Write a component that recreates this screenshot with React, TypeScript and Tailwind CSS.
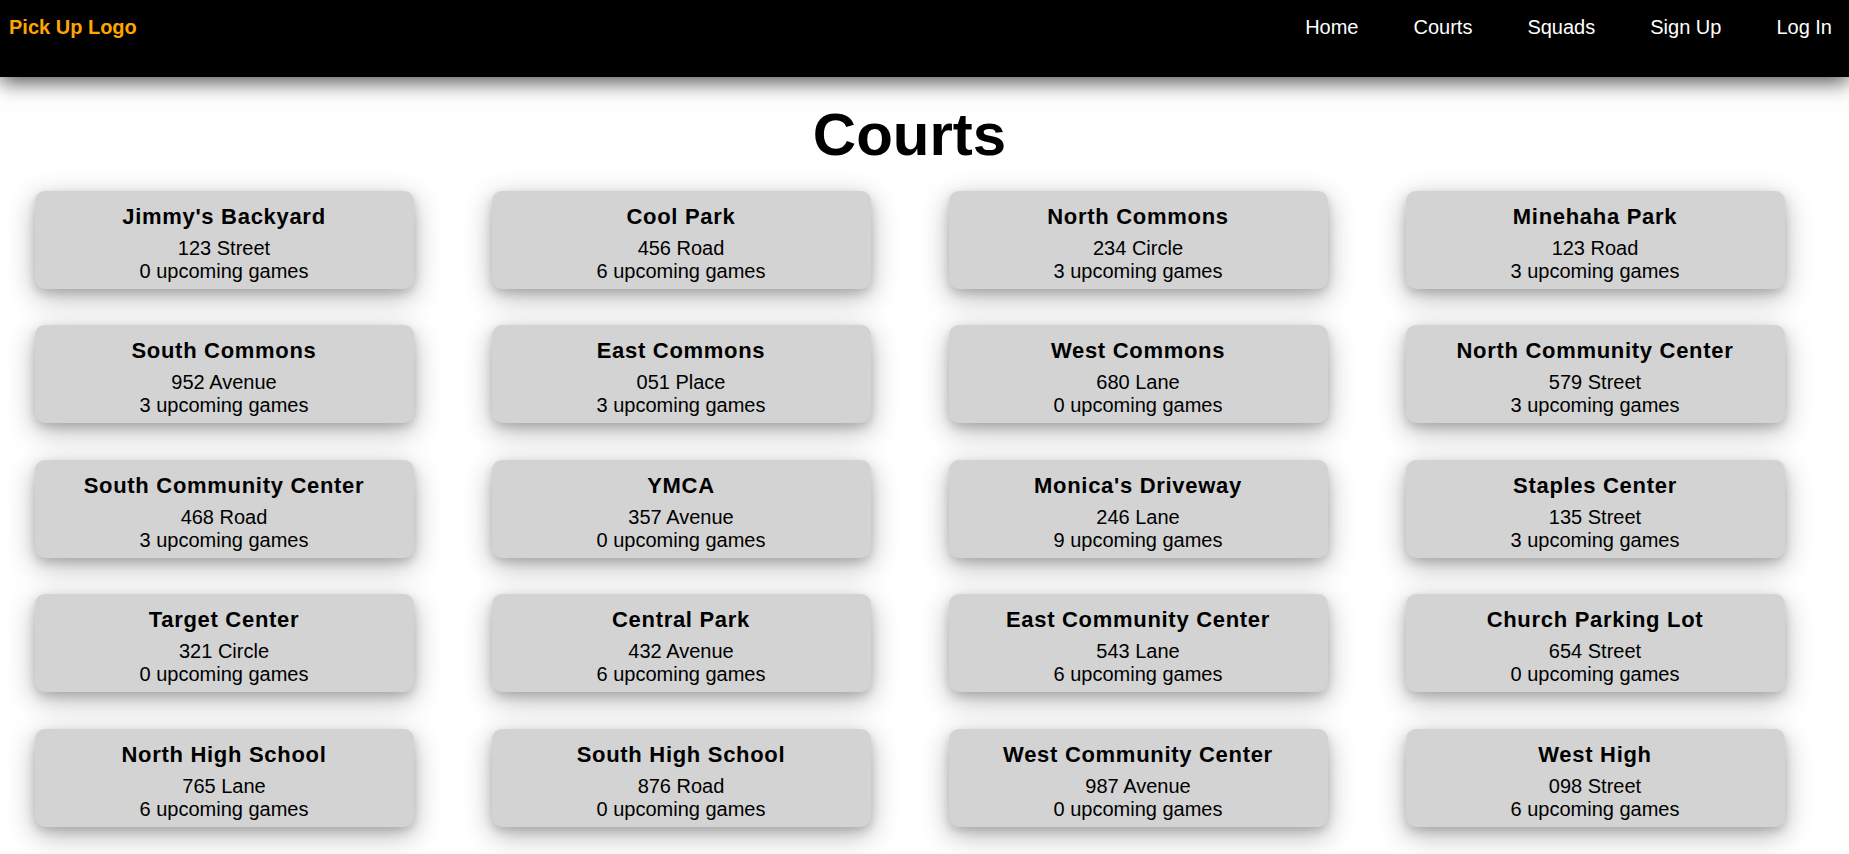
import React from 'react';

interface Court {
  name: string;
  address: string;
  games: number;
}

const courts: Court[] = [
  { name: "Jimmy's Backyard", address: '123 Street', games: 0 },
  { name: 'Cool Park', address: '456 Road', games: 6 },
  { name: 'North Commons', address: '234 Circle', games: 3 },
  { name: 'Minehaha Park', address: '123 Road', games: 3 },
  { name: 'South Commons', address: '952 Avenue', games: 3 },
  { name: 'East Commons', address: '051 Place', games: 3 },
  { name: 'West Commons', address: '680 Lane', games: 0 },
  { name: 'North Community Center', address: '579 Street', games: 3 },
  { name: 'South Community Center', address: '468 Road', games: 3 },
  { name: 'YMCA', address: '357 Avenue', games: 0 },
  { name: "Monica's Driveway", address: '246 Lane', games: 9 },
  { name: 'Staples Center', address: '135 Street', games: 3 },
  { name: 'Target Center', address: '321 Circle', games: 0 },
  { name: 'Central Park', address: '432 Avenue', games: 6 },
  { name: 'East Community Center', address: '543 Lane', games: 6 },
  { name: 'Church Parking Lot', address: '654 Street', games: 0 },
  { name: 'North High School', address: '765 Lane', games: 6 },
  { name: 'South High School', address: '876 Road', games: 0 },
  { name: 'West Community Center', address: '987 Avenue', games: 0 },
  { name: 'West High', address: '098 Street', games: 6 },
];

const navLinks = ['Home', 'Courts', 'Squads', 'Sign Up', 'Log In'];

const CourtCard: React.FC<{ court: Court }> = ({ court }) => (
  <div className="bg-[#d3d3d3] rounded-[10px] pt-[13px] pb-[6px] text-center text-black shadow-[0_4px_10px_0_rgba(0,0,0,0.15),0_8px_28px_0_rgba(0,0,0,0.3)]">
    <h3 className="text-[22px] leading-[25px] font-bold tracking-[0.7px] mb-[8px]">{court.name}</h3>
    <p className="text-[20px] leading-[23px]">{court.address}</p>
    <p className="text-[20px] leading-[23px]">{court.games} upcoming games</p>
  </div>
);

const App: React.FC = () => {
  return (
    <div className="min-h-screen bg-white font-['Liberation_Sans',Arial,sans-serif]">
      {/* Navbar */}
      <nav className="relative z-10 h-[77px] bg-black flex justify-between pl-[9px] pr-[17px] shadow-[0_5px_20px_0_rgba(0,0,0,0.7)]">
        <a className="mt-[16px] text-[20px] leading-[23px] font-bold text-[#ffa500]">Pick Up Logo</a>
        <ul className="flex gap-[55px] mt-[16px]">
          {navLinks.map((link) => (
            <li key={link} className="text-[20px] leading-[23px] text-white">{link}</li>
          ))}
        </ul>
      </nav>

      {/* Courts list */}
      <main className="w-[1819px] pb-[30px]">
        <h1 className="pt-[23px] mb-[22px] text-[60px] leading-[69px] font-bold text-center text-black">Courts</h1>
        <div className="grid grid-cols-[repeat(4,379px)] justify-center gap-x-[78px] gap-y-[36.4px]">
          {courts.map((court) => (
            <CourtCard key={court.name} court={court} />
          ))}
        </div>
      </main>
    </div>
  );
};

export default App;
